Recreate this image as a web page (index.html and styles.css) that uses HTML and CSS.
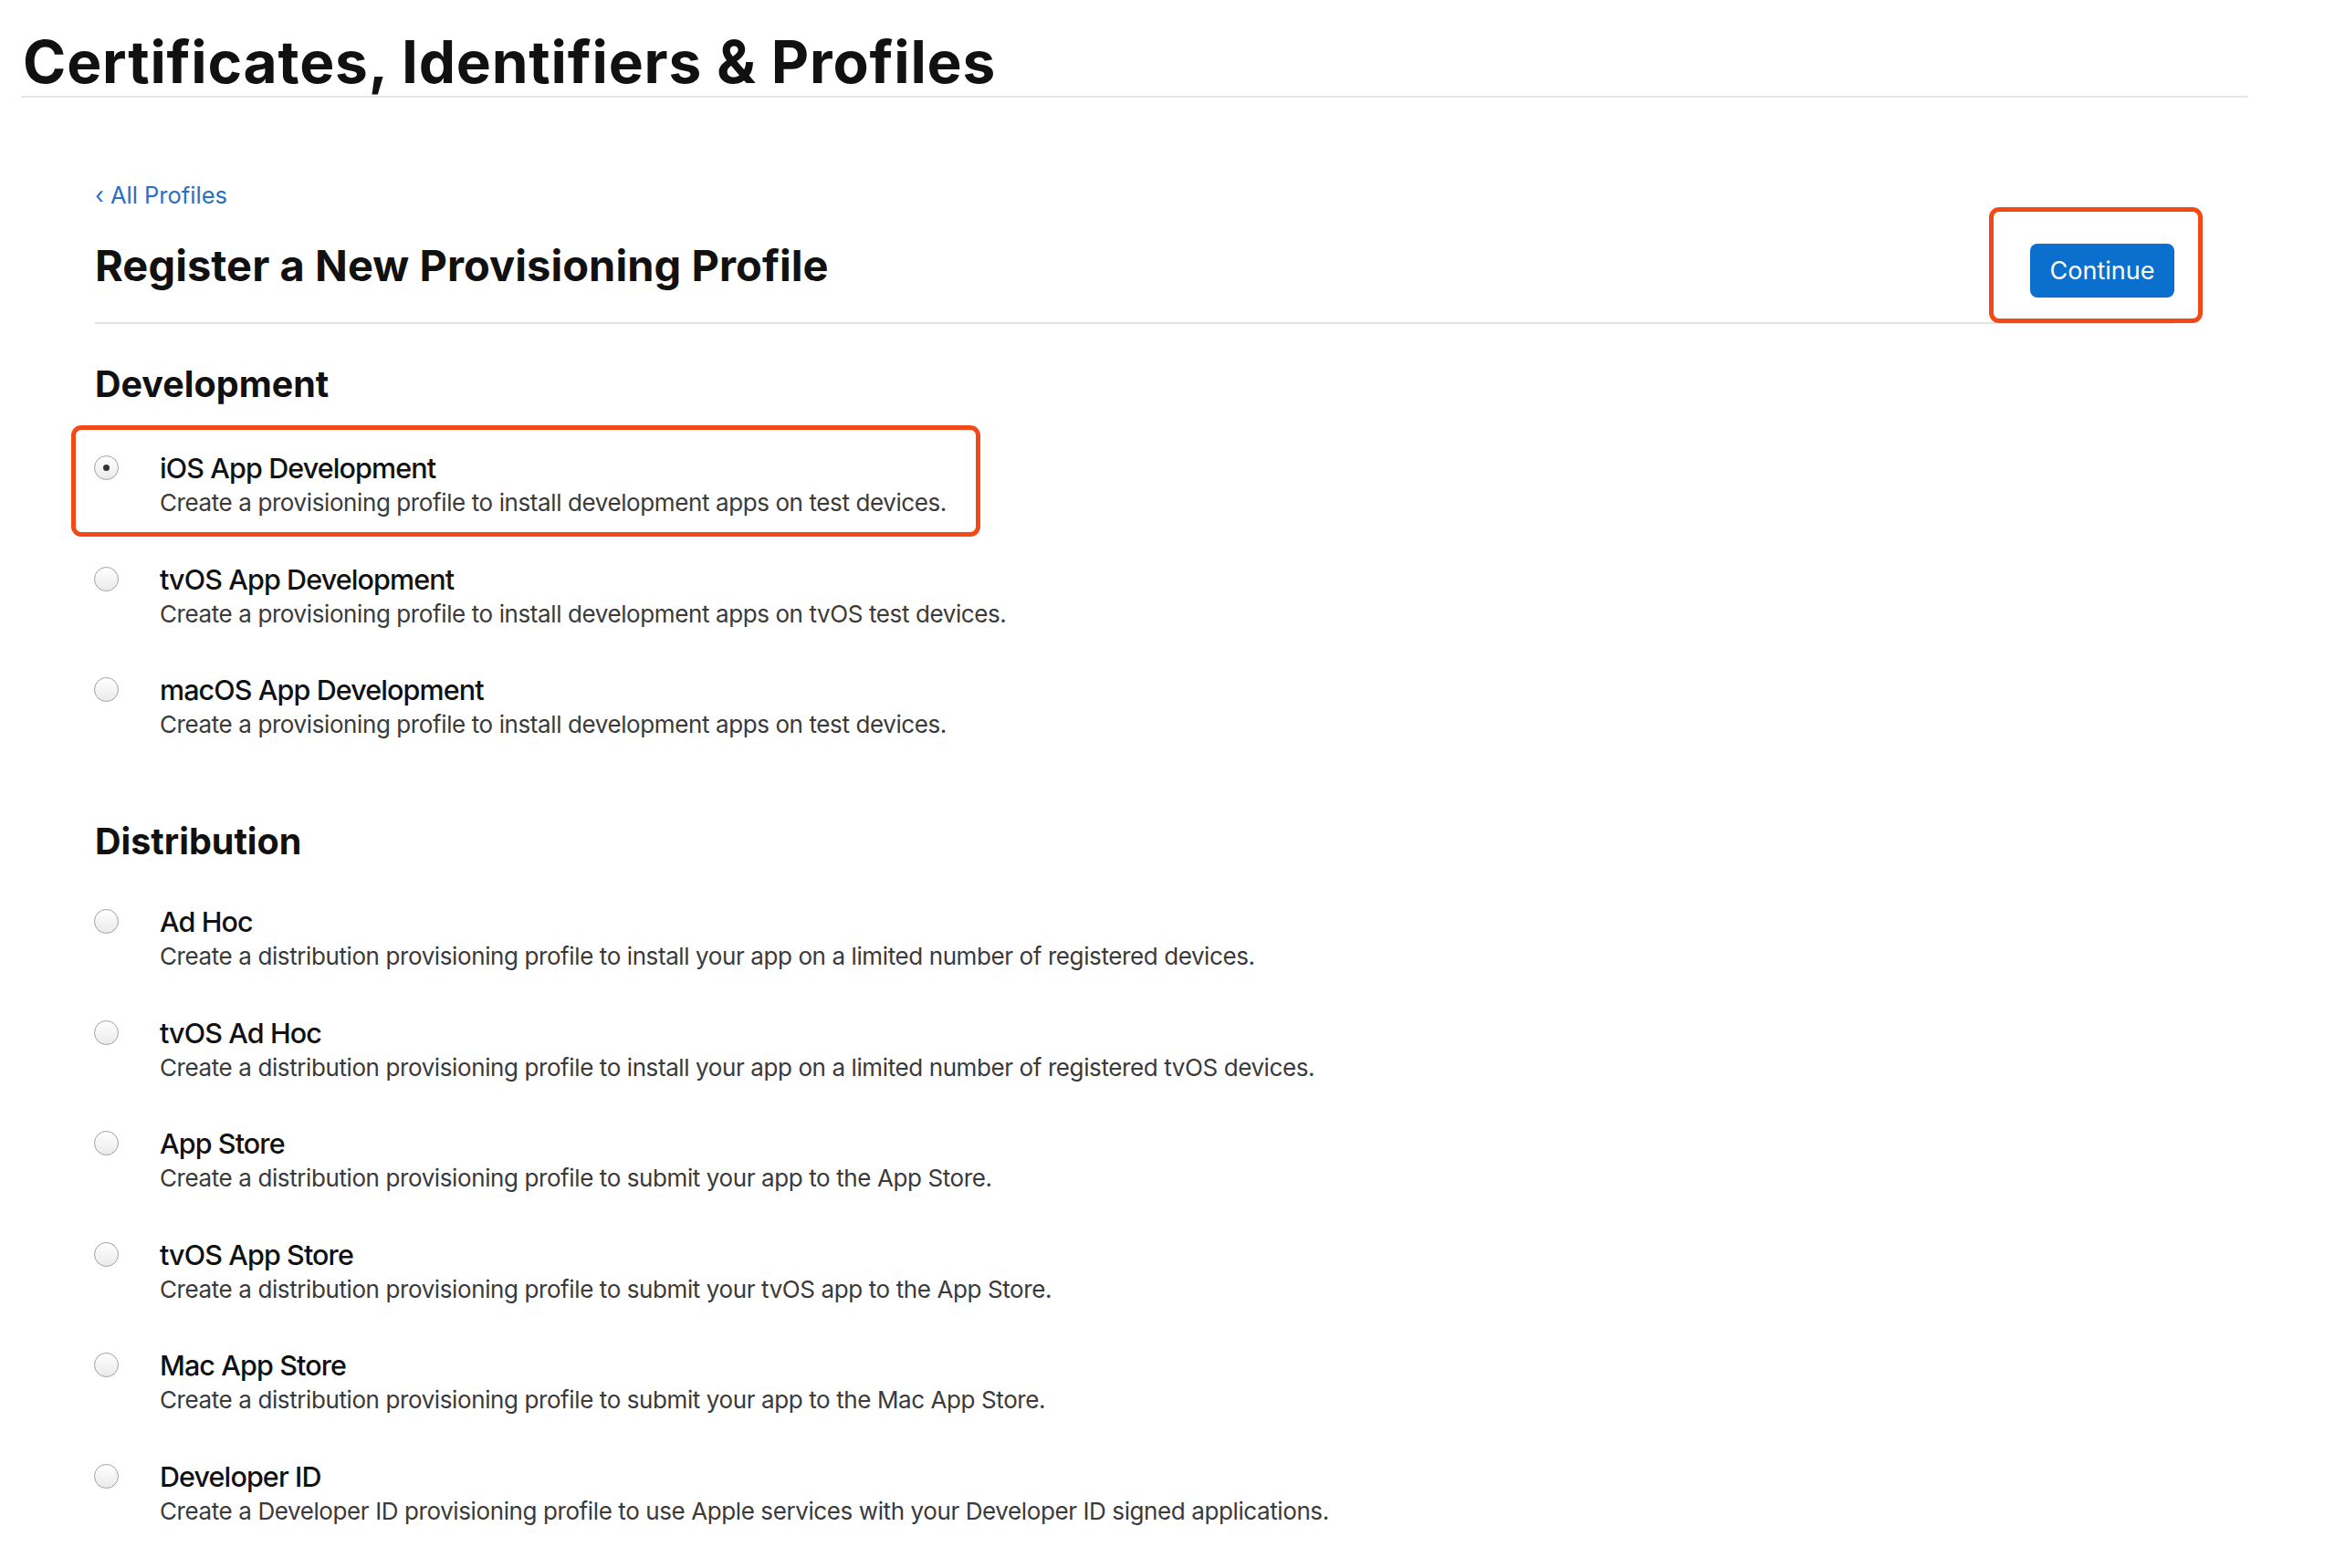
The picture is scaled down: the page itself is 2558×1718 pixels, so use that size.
FILE: index.html
```html
<!DOCTYPE html>
<html lang="en">
<head>
<meta charset="utf-8">
<title>Certificates, Identifiers &amp; Profiles</title>
<link rel="stylesheet" href="styles.css">
</head>
<body>
<header class="topbar">
  <h1 class="page-title">Certificates, Identifiers &amp; Profiles</h1>
</header>
<main class="content">
  <a class="back-link" href="#">&lsaquo; All Profiles</a>
  <div class="head-row">
    <h2 class="head-title">Register a New Provisioning Profile</h2>
    <div class="btn-wrap">
      <button class="btn-primary" type="button">Continue</button>
      <span class="annot annot-btn"></span>
    </div>
  </div>

  <section class="group group-dev">
    <h3 class="group-title">Development</h3>
    <ul class="options">
      <li class="option">
        <span class="radio checked"></span>
        <div class="opt-text">
          <div class="opt-name">iOS App Development</div>
          <div class="opt-desc">Create a provisioning profile to install development apps on test devices.</div>
        </div>
        <span class="annot annot-opt"></span>
      </li>
      <li class="option">
        <span class="radio"></span>
        <div class="opt-text">
          <div class="opt-name">tvOS App Development</div>
          <div class="opt-desc">Create a provisioning profile to install development apps on tvOS test devices.</div>
        </div>
      </li>
      <li class="option">
        <span class="radio"></span>
        <div class="opt-text">
          <div class="opt-name">macOS App Development</div>
          <div class="opt-desc">Create a provisioning profile to install development apps on test devices.</div>
        </div>
      </li>
    </ul>
  </section>

  <section class="group group-dist">
    <h3 class="group-title">Distribution</h3>
    <ul class="options">
      <li class="option">
        <span class="radio"></span>
        <div class="opt-text">
          <div class="opt-name">Ad Hoc</div>
          <div class="opt-desc">Create a distribution provisioning profile to install your app on a limited number of registered devices.</div>
        </div>
      </li>
      <li class="option">
        <span class="radio"></span>
        <div class="opt-text">
          <div class="opt-name">tvOS Ad Hoc</div>
          <div class="opt-desc">Create a distribution provisioning profile to install your app on a limited number of registered tvOS devices.</div>
        </div>
      </li>
      <li class="option">
        <span class="radio"></span>
        <div class="opt-text">
          <div class="opt-name">App Store</div>
          <div class="opt-desc">Create a distribution provisioning profile to submit your app to the App Store.</div>
        </div>
      </li>
      <li class="option">
        <span class="radio"></span>
        <div class="opt-text">
          <div class="opt-name">tvOS App Store</div>
          <div class="opt-desc">Create a distribution provisioning profile to submit your tvOS app to the App Store.</div>
        </div>
      </li>
      <li class="option">
        <span class="radio"></span>
        <div class="opt-text">
          <div class="opt-name">Mac App Store</div>
          <div class="opt-desc">Create a distribution provisioning profile to submit your app to the Mac App Store.</div>
        </div>
      </li>
      <li class="option">
        <span class="radio"></span>
        <div class="opt-text">
          <div class="opt-name">Developer ID</div>
          <div class="opt-desc">Create a Developer ID provisioning profile to use Apple services with your Developer ID signed applications.</div>
        </div>
      </li>
    </ul>
  </section>
</main>
</body>
</html>
```
FILE: styles.css
```css
* { box-sizing: border-box; }

html, body {
  margin: 0;
  padding: 0;
  background: #ffffff;
}

body {
  font-family: Inter, "Liberation Sans", sans-serif;
  color: #111111;
  height: 1718px;
  overflow: hidden;
}

.topbar {
  margin: 0 95px 0 23px;
  border-bottom: 2px solid #e6e6e6;
}

.page-title {
  margin: 31px 0 0 2px;
  padding-bottom: 1px;
  font-size: 64px;
  line-height: 73px;
  font-weight: 700;
  letter-spacing: 0.8px;
  color: #111111;
}

.content {
  margin-left: 104px;
  width: 2278px;
}

.back-link {
  display: block;
  margin-top: 91px;
  font-size: 25.5px;
  line-height: 32px;
  color: #2a6fc0;
  text-decoration: none;
}

.head-row {
  display: flex;
  justify-content: space-between;
  align-items: flex-start;
  margin-top: 37px;
  padding-bottom: 27px;
  border-bottom: 2px solid #e3e3e3;
}

.head-title {
  margin: 0;
  font-size: 47px;
  line-height: 48px;
  font-weight: 700;
  letter-spacing: 0.05px;
  color: #111111;
}

.btn-wrap {
  position: relative;
}

.btn-primary {
  display: block;
  width: 158px;
  height: 59px;
  border: 0;
  border-radius: 8px;
  background: #0b6fce;
  color: #ffffff;
  font-family: Inter, "Liberation Sans", sans-serif;
  font-size: 27px;
  font-weight: 400;
  padding: 0;
}

.annot {
  position: absolute;
  border: 5px solid #f24a17;
  border-radius: 11px;
  pointer-events: none;
}

.annot-btn {
  left: -45px;
  top: -40px;
  width: 234px;
  height: 127px;
}

.group-dev { margin-top: 43px; }
.group-dist { margin-top: 88px; }

.group-title {
  margin: 0;
  font-size: 39.5px;
  line-height: 46px;
  font-weight: 700;
  color: #111111;
}

.options {
  list-style: none;
  margin: 50px 0 0 0;
  padding: 0;
  display: flex;
  flex-direction: column;
  gap: 47.5px;
}

.group-dist .options {
  margin-top: 46px;
}

.option {
  position: relative;
  display: flex;
  align-items: flex-start;
  gap: 45px;
}

.radio {
  flex: none;
  width: 27px;
  height: 27px;
  margin-top: 5px;
  margin-left: -1px;
  border-radius: 50%;
  border: 1.5px solid #a0a0a0;
  background: linear-gradient(#ffffff, #eaeaea);
  display: flex;
  align-items: center;
  justify-content: center;
}

.radio.checked::after {
  content: "";
  width: 7px;
  height: 7px;
  border-radius: 50%;
  background: #333333;
}

.opt-name {
  font-size: 30.5px;
  line-height: 38px;
  font-weight: 500;
  letter-spacing: -0.9px;
  color: #111111;
}

.opt-desc {
  margin-top: 2px;
  font-size: 26px;
  line-height: 34px;
  letter-spacing: -0.4px;
  color: #3a3a3a;
}

.annot-opt {
  left: -26px;
  top: -28px;
  width: 996px;
  height: 122px;
}
```
